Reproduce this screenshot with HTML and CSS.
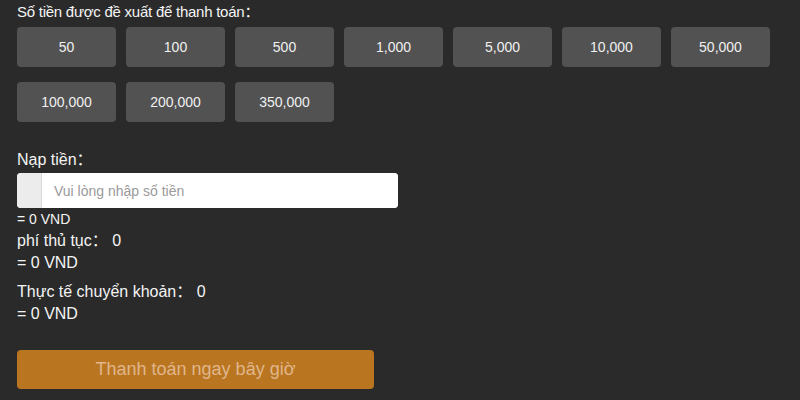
FILE: index.html
```html
<!DOCTYPE html>
<html lang="vi">
<head>
<meta charset="utf-8">
<link rel="stylesheet" href="styles.css">
</head>
<body>
<div class="page">
  <div class="title">Số tiền được đề xuất để thanh toán：</div>
  <div class="amounts">
    <button class="amt">50</button>
    <button class="amt">100</button>
    <button class="amt">500</button>
    <button class="amt">1,000</button>
    <button class="amt">5,000</button>
    <button class="amt">10,000</button>
    <button class="amt">50,000</button>
    <button class="amt">100,000</button>
    <button class="amt">200,000</button>
    <button class="amt">350,000</button>
  </div>
  <div class="label">Nạp tiền：</div>
  <div class="input-group">
    <span class="addon"></span>
    <input class="input" type="text" placeholder="Vui lòng nhập số tiền">
  </div>
  <div class="small">= 0 VND</div>
  <div class="line">phí thủ tục：&nbsp;0</div>
  <div class="line">= 0 VND</div>
  <div class="line gap">Thực tế chuyển khoản：&nbsp;0</div>
  <div class="line">= 0 VND</div>
  <button class="pay">Thanh toán ngay bây giờ</button>
</div>
</body>
</html>
```
FILE: styles.css
```css
html, body {
  margin: 0;
  padding: 0;
  background: #2a2a2a;
}
.page {
  padding: 2px 17px 0;
  font-family: "Liberation Sans", Arial, "Noto Sans CJK SC", sans-serif;
  color: #f4f4f4;
  font-size: 16px;
}
.title {
  font-size: 15px;
  letter-spacing: -0.25px;
  line-height: 20px;
  height: 20px;
}
.amounts {
  display: flex;
  flex-wrap: wrap;
  gap: 15px 10px;
  margin-top: 5px;
  width: 770px;
}
.amt {
  width: 99px;
  height: 40px;
  border: none;
  border-radius: 4px;
  background: #525252;
  color: #f0f0f0;
  font-family: inherit;
  font-size: 14px;
  padding: 0;
}
.label {
  margin-top: 28px;
  line-height: 20px;
  height: 20px;
}
.input-group {
  display: flex;
  width: 381px;
  height: 35px;
  margin-top: 3px;
  border-radius: 4px;
  overflow: hidden;
  background: #fff;
}
.addon {
  width: 24px;
  background: #ececec;
  border-right: 1px solid #dcdcdc;
}
.input {
  flex: 1;
  border: none;
  outline: none;
  padding: 0 12px;
  font-family: inherit;
  font-size: 14px;
  color: #333;
  background: #fff;
}
.input::placeholder {
  color: #9a9a9a;
}
.small {
  font-size: 14px;
  line-height: 22px;
  height: 22px;
}
.line {
  line-height: 22px;
  height: 22px;
}
.gap {
  margin-top: 7px;
}
.pay {
  display: block;
  margin-top: 25px;
  width: 357px;
  height: 39px;
  border: none;
  border-radius: 4px;
  background: #b9751f;
  color: #e0b68c;
  font-family: inherit;
  font-size: 18px;
  padding: 0;
}
```
